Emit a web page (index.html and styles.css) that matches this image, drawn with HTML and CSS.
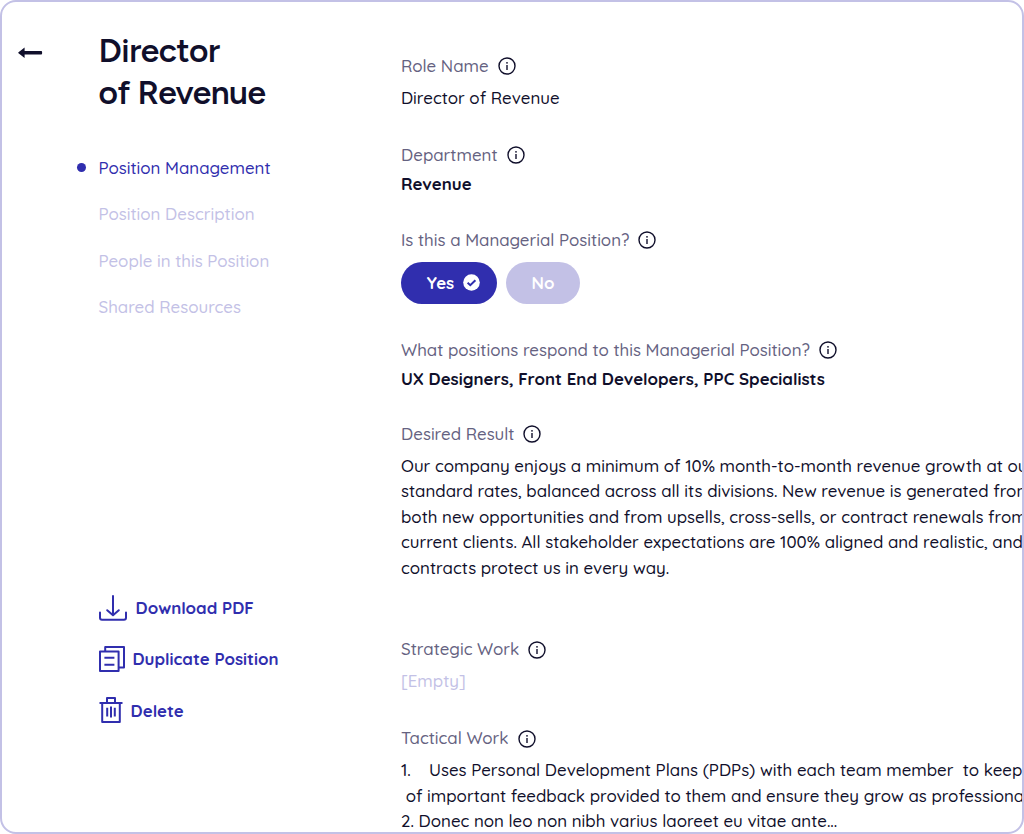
FILE: index.html
```
<!DOCTYPE html>
<html lang="en">
<head>
    <meta charset="UTF-8">
    <meta name="viewport" content="width=device-width, initial-scale=1.0">
    <title>Director of Revenue</title>
    <link rel="stylesheet" href="styles.css">
</head>
<body>
    <svg class="symbols" width="0" height="0">
        <symbol id="info" viewBox="0 0 18 18">
            <circle cx="9" cy="9" r="8" fill="none" stroke="currentColor" stroke-width="1.4"/>
            <circle cx="9" cy="5.8" r="0.9" fill="currentColor"/>
            <path d="M9 7.9v5" stroke="currentColor" stroke-width="1.4"/>
        </symbol>
    </svg>
    <div class="frame">
        <aside class="sidebar">
            <a class="back" href="#" aria-label="Back">
                <svg width="25" height="12" viewBox="0 0 25 12">
                    <path d="M6.6 0.6v3.5h16.6a0.9 0.9 0 0 1 0.9 0.9v1.5a0.9 0.9 0 0 1-0.9 0.9H6.6v3.5L0.5 6.2a0.6 0.6 0 0 1 0-0.9z" fill="currentColor"/>
                </svg>
            </a>
            <div class="side-content">
                <h1>Director<br>of Revenue</h1>
                <nav>
                    <a class="active" href="#">Position Management</a>
                    <a href="#">Position Description</a>
                    <a href="#">People in this Position</a>
                    <a href="#">Shared Resources</a>
                </nav>
                <div class="actions">
                    <a class="download" href="#">
                        <svg width="28" height="26" viewBox="0 0 28 26" fill="none" stroke="currentColor" stroke-width="2" stroke-linecap="round" stroke-linejoin="round">
                            <path d="M14 1v19M8.2 15.2l5.8 5 5.8-5M1 17.6v5.2a2 2 0 0 0 2 2h22a2 2 0 0 0 2-2v-5.2"/>
                        </svg>
                        <span>Download PDF</span>
                    </a>
                    <a class="duplicate" href="#">
                        <svg width="26" height="26" viewBox="0 0 26 26" fill="none" stroke="currentColor" stroke-width="2" stroke-linejoin="round">
                            <path d="M1 5.6h18.6V25H1zM6.2 5.6V1H25v20.4h-5.4M5.4 11.7h10M5.4 18.7h10"/>
                        </svg>
                        <span>Duplicate Position</span>
                    </a>
                    <a class="delete" href="#">
                        <svg width="24" height="26" viewBox="0 0 24 26" fill="none" stroke="currentColor" stroke-width="2" stroke-linejoin="round">
                            <path d="M0.5 5.9h23M3.2 5.9V25h17.6V5.9M8 5.9V1h8v4.9M8.2 10.8v8.6M12 9.6v11M15.8 10.8v8.6"/>
                        </svg>
                        <span>Delete</span>
                    </a>
                </div>
            </div>
        </aside>
        <main>
            <section class="field role">
                <h2><span>Role Name</span><svg class="info"><use href="#info"/></svg></h2>
                <p>Director of Revenue</p>
            </section>
            <section class="field department">
                <h2><span>Department</span><svg class="info"><use href="#info"/></svg></h2>
                <p class="strong">Revenue</p>
            </section>
            <section class="field managerial">
                <h2><span>Is this a Managerial Position?</span><svg class="info"><use href="#info"/></svg></h2>
                <div class="toggle">
                    <button class="yes">
                        <span>Yes</span>
                        <svg width="17" height="17" viewBox="0 0 17 17">
                            <circle cx="8.5" cy="8.5" r="8.3" fill="#fff"/>
                            <path d="M4.6 8.7l2.7 2.5 5.1-4.9" fill="none" stroke="#302eae" stroke-width="2"/>
                        </svg>
                    </button>
                    <button class="no"><span>No</span></button>
                </div>
            </section>
            <section class="field respond">
                <h2><span>What positions respond to this Managerial Position?</span><svg class="info"><use href="#info"/></svg></h2>
                <p class="strong">UX Designers, Front End Developers, PPC Specialists</p>
            </section>
            <section class="field result">
                <h2><span>Desired Result</span><svg class="info"><use href="#info"/></svg></h2>
                <p>
                    Our company enjoys a minimum of 10% month-to-month revenue growth at our<br>
                    standard rates, balanced across all its divisions. New revenue is generated from<br>
                    both new opportunities and from upsells, cross-sells, or contract renewals from<br>
                    current clients. All stakeholder expectations are 100% aligned and realistic, and<br>
                    contracts protect us in every way.
                </p>
            </section>
            <section class="field strategic">
                <h2><span>Strategic Work</span><svg class="info"><use href="#info"/></svg></h2>
                <p class="empty">[Empty]</p>
            </section>
            <section class="field tactical">
                <h2><span>Tactical Work</span><svg class="info"><use href="#info"/></svg></h2>
                <p>
                    <span class="number">1.</span>Uses Personal Development Plans (PDPs) with each team member&nbsp; to keep<br>
                    &nbsp;of important feedback provided to them and ensure they grow as professionals<br>
                    2. Donec non leo non nibh varius laoreet eu vitae ante...
                </p>
            </section>
        </main>
    </div>
</body>
</html>
```
FILE: styles.css
```
* {
    box-sizing: border-box;
}

body {
    font-family: Quicksand, Lato, sans-serif;
    font-size: 16.86px;
    font-weight: 500;
    margin: 0;
    background-color: #fff;
    color: #100f2b;
}

a {
    color: inherit;
    text-decoration: none;
}

svg {
    display: block;
    flex: none;
}

.symbols {
    position: absolute;
}

.frame {
    display: flex;
    height: 834px;
    border: 2px solid #c3c1e6;
    border-radius: 16px;
    overflow: hidden;
}

.sidebar {
    display: flex;
    flex: none;
    width: 399px;
    padding: 28px 0 0 16px;
}

.back {
    width: 80.5px;
    padding-top: 17px;
}

h1 {
    margin: 0;
    font-family: Figtree, Lato, sans-serif;
    font-size: 33.5px;
    font-weight: 600;
    line-height: 41.5px;
    letter-spacing: -0.5px;
}

nav {
    display: flex;
    flex-direction: column;
    margin-top: 31.5px;
    color: #c3c1e6;
}

nav a {
    height: 46.5px;
    line-height: 46.5px;
    white-space: nowrap;
}

nav .active {
    display: flex;
    align-items: center;
    color: #302eae;
}

nav .active::before {
    content: "";
    width: 9px;
    height: 9px;
    margin: 0 13px 0 -22px;
    border-radius: 50%;
    background-color: #302eae;
}

.actions {
    margin-top: 251.5px;
    color: #302eae;
    font-weight: 700;
}

.actions a {
    display: flex;
    align-items: center;
    height: 51px;
    gap: 9px;
}

.actions .duplicate,
.actions .delete {
    gap: 8px;
}

.actions .delete span {
    padding-top: 1px;
}

main {
    flex: none;
    padding-top: 52px;
    white-space: nowrap;
}

.field h2 {
    display: flex;
    align-items: center;
    height: 24px;
    margin: 0;
    color: #656281;
    font-size: inherit;
    font-weight: 500;
}

.field h2 span {
    padding-bottom: 1.5px;
}

.field p {
    margin: 6.9px 0 0;
    line-height: 25.4px;
}

.field .strong {
    margin-top: 4.3px;
    font-weight: 700;
}

.field .empty {
    color: #c3c1e6;
}

.info {
    width: 18px;
    height: 18px;
    margin-left: 9px;
    color: #100f2b;
}

.department {
    margin-top: 32.7px;
}

.managerial {
    margin-top: 31.3px;
}

.respond {
    margin-top: 34px;
}

.result {
    margin-top: 30.3px;
}

.strategic {
    margin-top: 57.7px;
}

.tactical {
    margin-top: 32.7px;
}

.toggle {
    display: flex;
    gap: 9px;
    margin-top: 10px;
}

.toggle button {
    display: flex;
    align-items: center;
    justify-content: center;
    height: 42px;
    padding: 0;
    border: none;
    border-radius: 21px;
    color: #fff;
    font: inherit;
    font-weight: 700;
}

.toggle .yes {
    gap: 9px;
    width: 96px;
    padding-left: 9px;
    background-color: #302eae;
}

.toggle .no {
    width: 74px;
    background-color: #c3c1e6;
}

.number {
    display: inline-block;
    width: 28px;
}
```
